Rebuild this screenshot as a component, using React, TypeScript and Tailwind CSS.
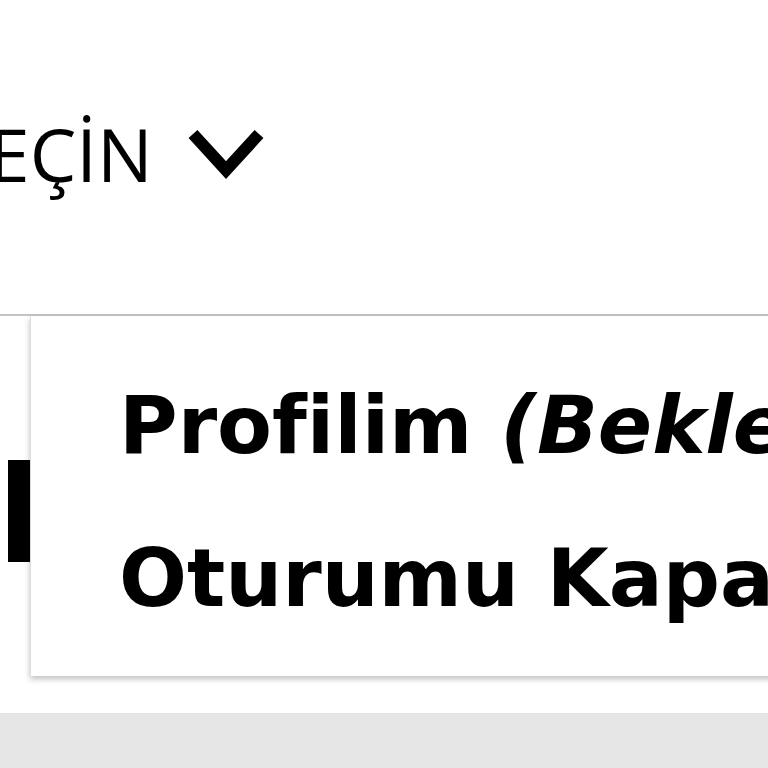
import React from "react";

const ChevronDown = () => (
  <svg width="80" height="56" viewBox="0 0 80 56" className="block">
    <path
      d="M6 8 L39 44 L72 8"
      fill="none"
      stroke="#000"
      strokeWidth={12}
      strokeLinecap="butt"
      strokeLinejoin="miter"
    />
  </svg>
);

export default function App() {
  return (
    <div className="relative w-[768px] h-[768px] overflow-hidden bg-white">
      {/* header */}
      <div className="h-[316px] border-b-2 border-[#c4c4c4] pt-[117px]">
        <div className="flex items-center gap-[34px] ml-[-52px]">
          <span
            className="text-[74px] leading-none text-black"
            style={{ fontFamily: '"Open Sans", "Noto Sans", sans-serif' }}
          >
            SEÇİN
          </span>
          <ChevronDown />
        </div>
      </div>

      {/* page body under the menu */}
      <div className="relative h-[397px]">
        <div className="absolute left-[8px] top-[144px] w-[22px] h-[102px] bg-black" />

        {/* user menu */}
        <div className="absolute left-[30px] top-0 w-[800px] h-[360px] bg-white border-l border-[#dcdcdc] shadow-[0_3px_6px_rgba(0,0,0,0.25)]">
          <ul
            className="flex flex-col gap-[73px] pl-[88px] pt-[70px] text-[80px] font-bold leading-none text-black whitespace-nowrap [font-variant-ligatures:none]"
            style={{ fontFamily: '"DejaVu Sans", Verdana, sans-serif' }}
          >
            <li>
              Profilim <i>(Bekleniyor)</i>
            </li>
            <li>Oturumu Kapat</li>
          </ul>
        </div>
      </div>

      <div className="h-[55px] bg-[#e6e6e6]" />
    </div>
  );
}
